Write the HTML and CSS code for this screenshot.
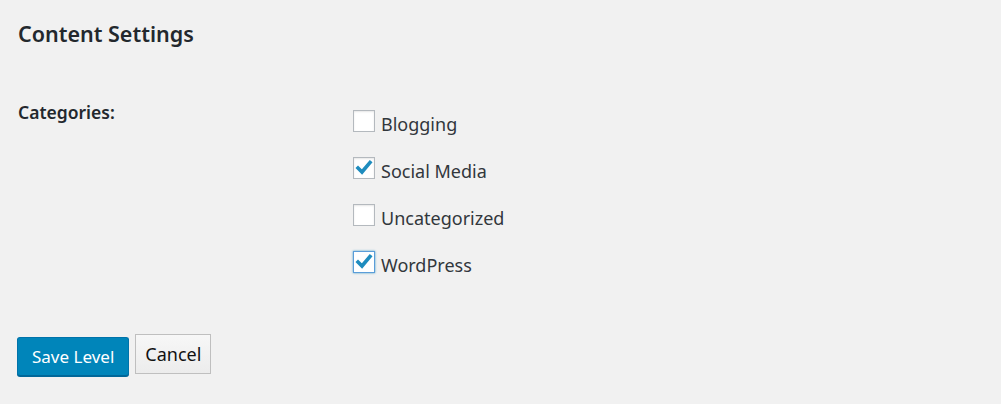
FILE: index.html
```html
<!DOCTYPE html>
<html>
<head>
<meta charset="utf-8">
<link rel="stylesheet" href="styles.css">
</head>
<body>
<div class="wrap">
  <h2 class="title">Content Settings</h2>
  <div class="form-row">
    <div class="label">Categories:</div>
    <div class="options">
      <label class="opt"><span class="box"></span><span class="txt">Blogging</span></label>
      <label class="opt"><span class="box checked"><svg viewBox="0 0 20 20" width="20" height="20"><path d="M4 10 L8 14 L16 4.5" fill="none" stroke="#1e8cbe" stroke-width="3.6" stroke-linecap="square"/></svg></span><span class="txt">Social Media</span></label>
      <label class="opt"><span class="box"></span><span class="txt">Uncategorized</span></label>
      <label class="opt"><span class="box checked focus"><svg viewBox="0 0 20 20" width="20" height="20"><path d="M4 10 L8 14 L16 4.5" fill="none" stroke="#1e8cbe" stroke-width="3.6" stroke-linecap="square"/></svg></span><span class="txt">WordPress</span></label>
    </div>
  </div>
  <div class="actions">
    <button class="btn primary">Save Level</button>
    <button class="btn secondary">Cancel</button>
  </div>
</div>
</body>
</html>
```
FILE: styles.css
```css
html, body {
  margin: 0;
  padding: 0;
  background: #f1f1f1;
}
body {
  font-family: "Noto Sans", "Open Sans", sans-serif;
  color: #23282d;
  width: 1001px;
  height: 404px;
  overflow: hidden;
}
.wrap {
  padding: 18px 18px 0 18px;
}
.title {
  margin: 0;
  font-size: 21.5px;
  font-weight: 600;
  line-height: 32px;
}
.form-row {
  display: flex;
  margin-top: 50px;
}
.label {
  width: 335px;
  font-size: 17.5px;
  font-weight: 600;
  line-height: 24px;
}
.options {
  display: flex;
  flex-direction: column;
  gap: 25px;
  padding-top: 10px;
}
.opt {
  display: flex;
  align-items: center;
  gap: 6px;
  height: 22px;
  font-size: 18px;
  color: #32373c;
}
.box {
  width: 20px;
  height: 20px;
  border: 1px solid #b4b9be;
  background: #fff;
  box-shadow: inset 0 1px 2px rgba(0,0,0,0.1);
  display: flex;
  align-items: center;
  justify-content: center;
  flex: none;
}
.box.focus {
  border-color: #5b9dd9;
  box-shadow: 0 0 2px rgba(30,140,190,0.8);
}
.txt {
  line-height: 22px;
  position: relative;
  top: 3px;
}
.actions {
  display: flex;
  align-items: flex-end;
  gap: 6px;
  margin-top: 61px;
  margin-left: -1px;
}
.btn {
  font-family: inherit;
  font-size: 17px;
  border-radius: 3px;
  cursor: pointer;
  padding: 0 14px;
}
.primary {
  background: #0085ba;
  border: 1px solid #0073aa;
  border-bottom-color: #006799;
  color: #fff;
  height: 39px;
  box-shadow: 0 1px 0 #006799;
  margin-bottom: -1px;
}
.secondary {
  background: linear-gradient(#f7f7f7, #ececec);
  border: 1px solid #bfbfbf;
  border-radius: 0;
  color: #111;
  height: 40px;
  font-size: 18px;
  padding: 0 9px;
  margin-bottom: 1px;
}
```
